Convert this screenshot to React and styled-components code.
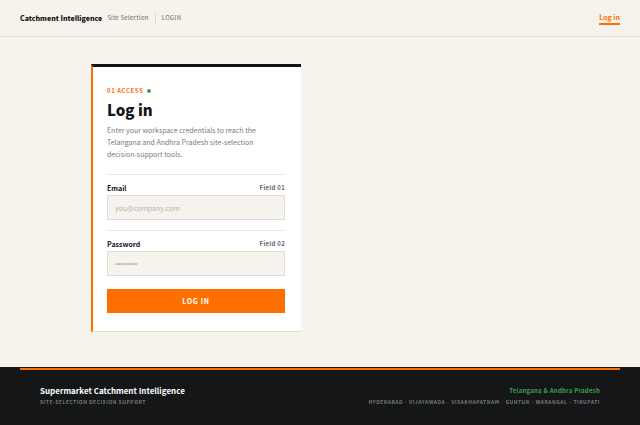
import React from "react";
import styled, {createGlobalStyle} from "styled-components";

const cities = ["HYDERABAD", "VIJAYAWADA", "VISAKHAPATNAM", "GUNTUR", "WARANGAL", "TIRUPATI"]

const App = () =>{
    return(
        <PageStyle>
            <GlobalStyle />
            <HeaderStyle>
                <div className="brand">
                    <a className="name" href="/">Catchment Intelligence</a>
                    <span className="product">Site Selection</span>
                    <span className="crumb">LOGIN</span>
                </div>
                <nav>
                    <NavLink href="/login">Log in</NavLink>
                </nav>
            </HeaderStyle>
            <MainStyle>
                <LoginForm />
            </MainStyle>
            <Footer />
        </PageStyle>
    )
}

const LoginForm = () =>{
    return(
        <CardStyle onSubmit={(e) => e.preventDefault()}>
            <Eyebrow>01 ACCESS <Dot /></Eyebrow>
            <Title>Log in</Title>
            <Intro>
                Enter your workspace credentials to reach the Telangana and Andhra Pradesh site-selection decision-support tools.
            </Intro>
            <Field id="email" type="email" label="Email" note="Field 01" placeholder="you@company.com" />
            <Field id="password" type="password" label="Password" note="Field 02" placeholder="••••••••" />
            <SubmitButton type="submit">LOG IN</SubmitButton>
        </CardStyle>
    )
}

const Field = ({id, type, label, note, placeholder}) =>{
    return(
        <FieldStyle>
            <div className="field-head">
                <label htmlFor={id}>{label}</label>
                <span>{note}</span>
            </div>
            <Input id={id} type={type} placeholder={placeholder} />
        </FieldStyle>
    )
}

const Footer = () =>{
    return(
        <FooterStyle>
            <div className="inner">
                <div>
                    <FooterTitle>Supermarket Catchment Intelligence</FooterTitle>
                    <FooterNote>SITE-SELECTION DECISION SUPPORT</FooterNote>
                </div>
                <div className="region">
                    <FooterTitle $region>Telangana &amp; Andhra Pradesh</FooterTitle>
                    <FooterNote>
                        {cities.map((city, i) => (
                            <React.Fragment key={city}>
                                {i > 0 && <Separator> · </Separator>}
                                {city}
                            </React.Fragment>
                        ))}
                    </FooterNote>
                </div>
            </div>
        </FooterStyle>
    )
}

const GlobalStyle = createGlobalStyle`
    *{
        box-sizing: border-box;
        margin: 0;
        padding: 0;
    }
    body{
        background-color: #f6f3ec;
        color: #141617;
        font-family: "Noto Sans CJK SC", "Noto Sans", sans-serif;
        font-size: 7px;
        line-height: 12px;
    }
    a{
        color: inherit;
        text-decoration: none;
    }
    input, button{
        font-family: inherit;
    }
`

const PageStyle = styled.div`
    display: flex;
    flex-direction: column;
    min-height: 100vh;
`

const HeaderStyle = styled.header`
    display: flex;
    justify-content: space-between;
    align-items: center;
    padding: 11px 20px;
    border-bottom: 1px solid #e2dfd9;
    .brand{
        display: flex;
        align-items: center;
    }
    .name{
        font-size: 7px;
        font-weight: 900;
    }
    .product, .crumb{
        color: #66686a;
        font-size: 6px;
    }
    .product{
        margin-left: 5px;
        letter-spacing: 0.04em;
    }
    .crumb{
        margin-left: 6px;
        padding-left: 6px;
        border-left: 1px solid #dedbd5;
        letter-spacing: 0.06em;
    }
`

const NavLink = styled.a`
    display: block;
    border-bottom: 2px solid #ff6f00;
    color: #ff6f00;
    font-weight: 700;
`

const MainStyle = styled.main`
    flex: 1;
    width: 100%;
    max-width: 458px;
    margin: 0 auto;
    padding: 27px 0 35px;
`

const CardStyle = styled.form`
    max-width: 210px;
    padding: 18px 16px 18px 14px;
    background-color: #fff;
    border-top: 3px solid #111315;
    border-left: 2px solid #ff6f00;
    border-bottom: 1px solid #dedbd5;
`

const Eyebrow = styled.p`
    display: flex;
    align-items: center;
    gap: 4px;
    color: #ff6f00;
    font-size: 6px;
    font-weight: 700;
    letter-spacing: 0.1em;
`

const Dot = styled.span`
    width: 4px;
    height: 4px;
    border-radius: 50%;
    background-color: #43a047;
`

const Title = styled.h1`
    margin: 4px 0 5px;
    font-size: 15px;
    font-weight: 900;
    line-height: 18px;
`

const Intro = styled.p`
    max-width: 170px;
    margin-bottom: 14px;
    color: #777a7c;
`

const FieldStyle = styled.div`
    margin-bottom: 10px;
    padding-top: 7px;
    border-top: 1px solid #e6e6e4;
    .field-head{
        display: flex;
        justify-content: space-between;
        align-items: center;
        margin-bottom: 1px;
    }
    label{
        font-weight: 700;
    }
    span{
        color: #66686a;
        font-size: 6px;
        font-weight: 700;
        letter-spacing: 0.05em;
    }
`

const Input = styled.input`
    display: block;
    width: 100%;
    height: 25px;
    padding: 0 7px;
    border: 1px solid #dcdbd7;
    border-radius: 0;
    background-color: #f6f3ec;
    color: #141617;
    font-size: 7px;
    &::placeholder{
        color: #b5b4b1;
    }
    &[type="password"]{
        font-family: "Liberation Sans", sans-serif;
        font-size: 8px;
    }
`

const SubmitButton = styled.button`
    display: block;
    width: 100%;
    height: 24px;
    margin-top: 13px;
    border: none;
    background-color: #ff6f00;
    color: #fff;
    font-size: 7px;
    font-weight: 700;
    letter-spacing: 0.1em;
    cursor: pointer;
`

const FooterStyle = styled.footer`
    padding: 1px 20px 0;
    background-color: #141617;
    .inner{
        display: flex;
        justify-content: space-between;
        padding: 15px 20px 18px;
        border-top: 2px solid #ff6f00;
    }
    .region{
        text-align: right;
    }
`

const FooterTitle = styled.p`
    color: ${(props) => props.$region ? "#43a047" : "#fff"};
    font-size: ${(props) => props.$region ? "6px" : "8px"};
    font-weight: 700;
    letter-spacing: ${(props) => props.$region ? "0.04em" : "normal"};
`

const FooterNote = styled.p`
    color: #77797a;
    font-size: 5px;
    font-weight: 700;
    letter-spacing: 0.1em;
    line-height: 10px;
`

const Separator = styled.span`
    font-family: "Liberation Sans", sans-serif;
`

export default App
